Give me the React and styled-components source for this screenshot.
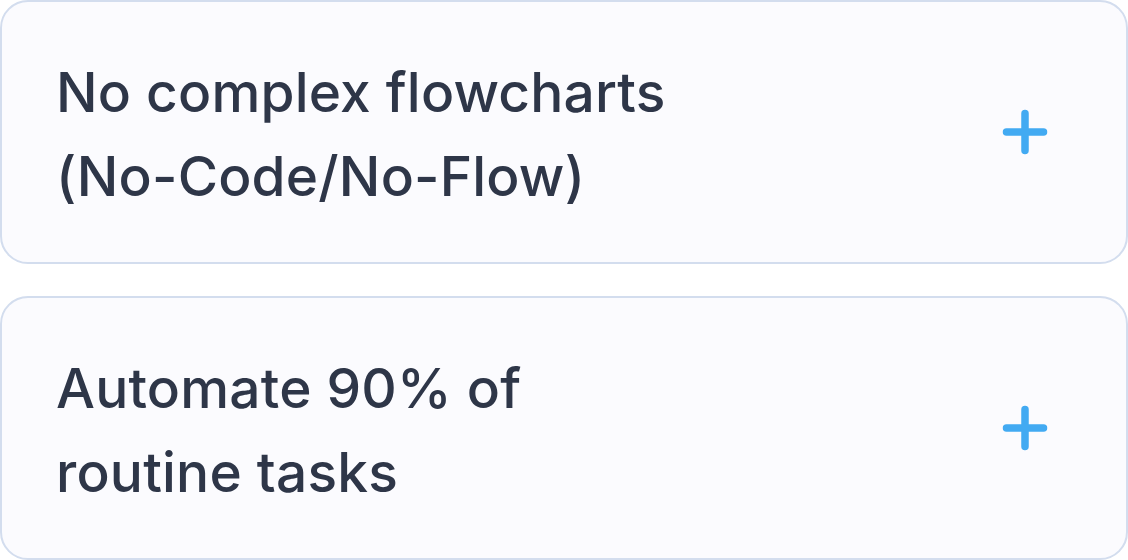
import styled, { createGlobalStyle } from 'styled-components';

const GlobalStyle = createGlobalStyle`
  * { box-sizing: border-box; }
  body {
    margin: 0;
    background: #ffffff;
    font-family: 'Inter', 'Noto Sans', sans-serif;
  }
`;

const List = styled.div`
  display: flex;
  flex-direction: column;
  gap: 32px;
  width: 1128px;
`;

const Item = styled.div`
  display: flex;
  align-items: center;
  justify-content: space-between;
  height: 264px;
  padding: 0 78px 0 54px;
  background: #fbfbfe;
  border: 2px solid #d3ddee;
  border-radius: 28px;
`;

const Question = styled.div`
  padding-top: 4px;
  font-size: 55px;
  line-height: 84px;
  font-weight: 500;
  color: #2e3648;
  letter-spacing: 0.2px;
`;

const Toggle = styled.button`
  display: flex;
  align-items: center;
  justify-content: center;
  width: 46px;
  height: 46px;
  padding: 0;
  border: none;
  background: none;
  cursor: pointer;
`;

const PlusIcon = () => (
  <svg width="46" height="46" viewBox="0 0 46 46">
    <path d="M23 4.5v37M4.5 23h37" stroke="#42aaf2" strokeWidth="7.5" strokeLinecap="round" />
  </svg>
);

const items = [
  ['No complex flowcharts', '(No-Code/No-Flow)'],
  ['Automate 90% of', 'routine tasks'],
];

const App = () => (
  <>
    <GlobalStyle />
    <List>
      {items.map((lines) => (
        <Item key={lines[0]}>
          <Question>
            {lines[0]}
            <br />
            {lines[1]}
          </Question>
          <Toggle aria-label="Expand">
            <PlusIcon />
          </Toggle>
        </Item>
      ))}
    </List>
  </>
);

export default App;
